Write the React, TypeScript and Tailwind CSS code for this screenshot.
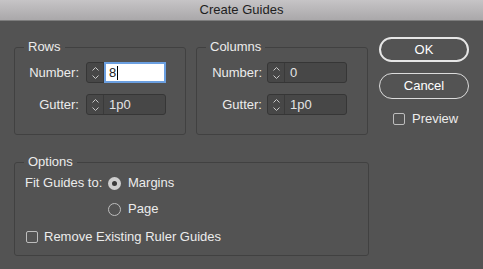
import React from "react";

const font = { fontFamily: '"Liberation Sans", Arial, sans-serif' };

function Arrows() {
  return (
    <div className="flex h-full w-[17px] shrink-0 items-center justify-center border-r border-[#3a3a3a]">
      <svg width="9" height="16" viewBox="0 0 9 16" fill="none">
        <path d="M1.5 5.5 L4.5 2.5 L7.5 5.5" stroke="#c8c8c8" strokeWidth="1" />
        <path d="M1.5 10.5 L4.5 13.5 L7.5 10.5" stroke="#c8c8c8" strokeWidth="1" />
      </svg>
    </div>
  );
}

function Spinner({ value, focused }: { value: string; focused?: boolean }) {
  return (
    <div className="flex h-[21px] w-[80px] items-stretch rounded-[3px] border border-[#363636] bg-[#474747]">
      <Arrows />
      {focused ? (
        <div className="-my-px -mr-px flex flex-1 items-center border-2 border-[#6b9fe0] bg-white pl-[3px] text-[13px] text-[#222]">
          8<span className="ml-px inline-block h-[14px] w-px bg-black" />
        </div>
      ) : (
        <div className="flex flex-1 items-center pl-[5px] text-[13px] text-[#e4e4e4]">{value}</div>
      )}
    </div>
  );
}

function Group({
  title,
  children,
  className,
}: {
  title: string;
  children: React.ReactNode;
  className?: string;
}) {
  return (
    <fieldset className={"rounded-[3px] border border-[#414141] " + (className ?? "")}>
      <legend className="ml-[9px] px-[4px] text-[13px] leading-[16px] text-[#ececec]">{title}</legend>
      {children}
    </fieldset>
  );
}

function FieldRows({ labelW, gap, focused }: { labelW: string; gap: string; focused?: boolean }) {
  return (
    <div className="mt-[7px] flex flex-col gap-[11px]">
      <div className={"flex items-center " + gap}>
        <span className={"text-right text-[13px] text-[#ececec] " + labelW}>Number:</span>
        <Spinner value="0" focused={focused} />
      </div>
      <div className={"flex items-center " + gap}>
        <span className={"text-right text-[13px] text-[#ececec] " + labelW}>Gutter:</span>
        <Spinner value="1p0" />
      </div>
    </div>
  );
}

function Radio({ checked }: { checked?: boolean }) {
  return checked ? (
    <span className="flex h-[13px] w-[13px] items-center justify-center rounded-full bg-[#cfcfcf]">
      <span className="h-[5px] w-[5px] rounded-full bg-[#3a3a3a]" />
    </span>
  ) : (
    <span className="h-[13px] w-[13px] rounded-full border border-[#bdbdbd]" />
  );
}

function Check() {
  return <span className="h-[12px] w-[12px] rounded-[2px] border border-[#bdbdbd]" />;
}

export default function App() {
  return (
    <div className="h-[269px] w-[483px] overflow-hidden bg-[#535353]" style={font}>
      <div className="flex h-[21px] items-center justify-center border-b border-[#7d7d7d] bg-gradient-to-b from-[#c6c4c6] to-[#aaa8aa] text-[13px] text-[#1e1e1e]">
        Create Guides
      </div>

      <div className="flex gap-[10px] pl-[14px]">
        <div className="flex w-[355px] flex-col pt-[18px]">
          <div className="flex gap-[10px]">
            <Group title="Rows" className="w-[172px] pb-[19px]">
              <FieldRows labelW="w-[64px]" gap="gap-[7px]" focused />
            </Group>
            <Group title="Columns" className="w-[172px] pb-[19px]">
              <FieldRows labelW="w-[65px]" gap="gap-[5px]" />
            </Group>
          </div>

          <Group title="Options" className="mt-[19px] pb-[10px]">
            <div className="mt-[5px] flex flex-col pl-[10px] text-[13px] text-[#ececec]">
              <div className="flex h-[16px] items-center">
                <span className="w-[83px]">Fit Guides to:</span>
                <Radio checked />
                <span className="ml-[7px]">Margins</span>
              </div>
              <div className="mt-[10px] flex h-[16px] items-center">
                <span className="w-[83px]" />
                <Radio />
                <span className="ml-[7px]">Page</span>
              </div>
              <div className="mt-[12px] flex h-[16px] items-center pl-px">
                <Check />
                <span className="ml-[6px]">Remove Existing Ruler Guides</span>
              </div>
            </div>
          </Group>
        </div>

        <div className="flex w-[90px] flex-col pt-[16px]">
          <button className="h-[25px] rounded-full border-2 border-[#e6e6e6] text-[13px] text-white">OK</button>
          <button className="mt-[11px] h-[26px] rounded-full border border-[#dcdcdc] text-[13px] text-white">
            Cancel
          </button>
          <div className="mt-[12px] flex h-[16px] items-center pl-[14px] text-[13px] text-[#ececec]">
            <Check />
            <span className="ml-[7px]">Preview</span>
          </div>
        </div>
      </div>
    </div>
  );
}
